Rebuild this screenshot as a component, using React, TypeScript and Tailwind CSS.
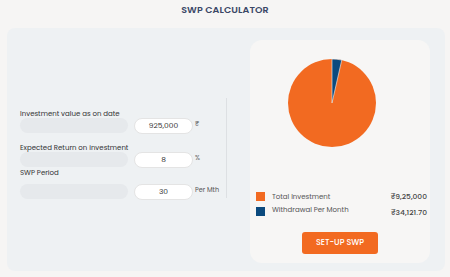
import React from "react";

const font = { fontFamily: "Poppins, Inter, 'Noto Sans', sans-serif" };

function Row({ value, unit }: { value: string; unit: string }) {
  return (
    <div className="flex items-start h-[16px]">
      <div className="w-[108px] h-[15px] mt-[0.5px] rounded-full bg-[#e6e9ec]" />
      <div className="ml-[6px] w-[59px] h-[16px] rounded-full bg-white border border-[#e4e4e4] flex items-center justify-center text-[7.5px] text-[#333] leading-none">
        {value}
      </div>
      <div className="ml-[2px] mt-[2px] text-[6.5px] leading-[8px] text-[#555]">{unit}</div>
    </div>
  );
}

function Pie() {
  const r = 44;
  const t = (360 * 34121.7) / (925000 + 34121.7);
  const a = (t * Math.PI) / 180;
  const ex = 44 + r * Math.sin(a);
  const ey = 44 - r * Math.cos(a);
  return (
    <svg width="88" height="88" viewBox="0 0 88 88">
      <circle cx="44" cy="44" r="44" fill="#f26a21" />
      <path d={`M44 44 L44 0 A44 44 0 0 1 ${ex} ${ey} Z`} fill="#0c4a7e" stroke="#f7f6f5" strokeWidth="0.6" />
    </svg>
  );
}

export default function App() {
  return (
    <div className="w-[450px] h-[277px] bg-[#f6f5f4] overflow-hidden" style={font}>
      <div className="pt-[5px] h-[28px] text-center text-[9.5px] font-semibold text-[#3a4766] leading-[10px] tracking-[0.1px]">
        SWP CALCULATOR
      </div>
      <div className="ml-[7px] w-[438px] h-[243px] rounded-[8px] bg-[#eef1f3] flex">
        <div className="w-[243px] flex items-center">
          <div className="ml-[13px] w-[207px] h-[100px] border-r border-[#dde0e3] mb-[4px]">
            <div className="mt-[12px] text-[7px] leading-[8px] text-[#333]">Investment value as on date</div>
            <Row value="925,000" unit="₹" />
            <div className="mt-[10px] text-[7px] leading-[8px] text-[#333]">Expected Return on investment</div>
            <div className="mt-[0px]">
              <Row value="8" unit="%" />
            </div>
            <div className="mt-[1px] text-[7px] leading-[8px] text-[#333]">SWP Period</div>
            <div className="mt-[7px]">
              <Row value="30" unit="Per Mth" />
            </div>
          </div>
        </div>
        <div className="mt-[12px] w-[180px] h-[223px] rounded-[12px] bg-[#f7f6f5] flex flex-col">
          <div className="mt-[19px] ml-[38px]">
            <Pie />
          </div>
          <div className="mt-[45px] flex items-start text-[7px] text-[#555] leading-[8px]">
            <div className="ml-[6px] w-[9px] h-[9px] bg-[#f26a21]" />
            <div className="ml-[7px] mt-[0.5px] flex-1">Total Investment</div>
            <div className="mr-[3px] mt-[0.5px] text-[7.5px] font-medium text-[#444]">₹9,25,000</div>
          </div>
          <div className="mt-[6px] flex items-start text-[7px] text-[#555] leading-[8px]">
            <div className="ml-[6px] w-[9px] h-[9px] bg-[#0c4a7e]" />
            <div className="ml-[7px] -mt-[1px] flex-1">Withdrawal Per Month</div>
            <div className="mr-[3px] mt-[2px] text-[7.5px] font-medium text-[#444]">₹34,121.70</div>
          </div>
          <div className="mt-[15px] flex justify-center">
            <div className="w-[76px] h-[22px] rounded-[3px] bg-[#f26a21] text-white text-[8px] font-medium flex items-center justify-center">
              SET-UP SWP
            </div>
          </div>
        </div>
      </div>
    </div>
  );
}
